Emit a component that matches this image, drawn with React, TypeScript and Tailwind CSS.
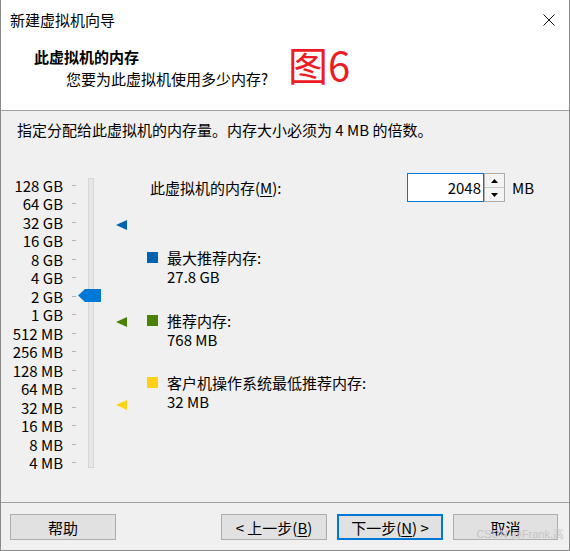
import React from 'react';

const sizes = [
  '128 GB', '64 GB', '32 GB', '16 GB', '8 GB', '4 GB', '2 GB', '1 GB',
  '512 MB', '256 MB', '128 MB', '64 MB', '32 MB', '16 MB', '8 MB', '4 MB',
];

function Marker({ color, top }: { color: string; top: string }) {
  return (
    <svg className={`absolute left-[40px] ${top}`} width="11" height="10" viewBox="0 0 11 10">
      <polygon points="0,5 11,0 11,10" fill={color} />
    </svg>
  );
}

function Legend({ color, label, value, className }: { color: string; label: string; value: string; className?: string }) {
  return (
    <div className={`flex items-start -ml-[3px] leading-[19px] ${className ?? ''}`}>
      <div className={`w-[11px] h-[11px] mt-[4px] mr-[9px] ${color}`} />
      <div>
        <div>{label}</div>
        <div>{value}</div>
      </div>
    </div>
  );
}

function Button({ children, primary }: { children: React.ReactNode; primary?: boolean }) {
  return (
    <div
      className={`h-[26px] flex items-center justify-center bg-[#e1e1e1] leading-none whitespace-nowrap ${
        primary ? 'border-2 border-[#0078d7]' : 'border border-[#adadad]'
      }`}
    >
      {children}
    </div>
  );
}

export default function App() {
  return (
    <div className="relative w-[570px] h-[551px] bg-[#f0f0f0] border-x border-b border-[#8a8a8a] flex flex-col text-[15px] text-black font-['Noto_Sans_CJK_SC',sans-serif]">
      {/* Title bar + header */}
      <div className="h-[111px] shrink-0 bg-white border-b border-[#a0a0a0]">
        <div className="h-[40px] flex items-center pl-[9px] pr-[14px]">
          <div className="flex-1 leading-[20px]">新建虚拟机向导</div>
          <svg width="12" height="12" viewBox="0 0 12 12">
            <path d="M0.5 0.5L11.5 11.5M11.5 0.5L0.5 11.5" stroke="#111" strokeWidth="1" />
          </svg>
        </div>
        <div className="flex pt-[7px] pl-[33px]">
          <div className="w-[256px]">
            <div className="font-bold leading-[20px]">此虚拟机的内存</div>
            <div className="pl-[32px] mt-[2px] leading-[20px]">您要为此虚拟机使用多少内存?</div>
          </div>
          <div className="text-[40px] leading-[40px] -mt-[3px] -ml-[2px] text-[#ed1c24]">图6</div>
        </div>
      </div>

      {/* Body */}
      <div className="flex-1 pt-[9px] pl-[16px]">
        <div className="leading-[20px]">指定分配给此虚拟机的内存量。内存大小必须为 4 MB 的倍数。</div>

        <div className="flex mt-[36px]">
          {/* Scale labels */}
          <div className="flex flex-col">
            {sizes.map((s) => (
              <div key={s} className="flex items-center h-[18.53px]">
                <div className="w-[46px] flex justify-end whitespace-nowrap leading-none">{s}</div>
                <div className="ml-[9px] w-[4px] h-px bg-[#b4b4b4]" />
              </div>
            ))}
          </div>

          {/* Slider */}
          <div className="relative w-[74px] h-[296.5px]">
            <div className="ml-[12px] mt-[2px] w-[6px] h-[290px] bg-[#e7e7e7] border border-[#d6d6d6]" />
            <svg className="absolute left-[2px] top-[113px]" width="23" height="13" viewBox="0 0 23 13">
              <polygon points="0,6.5 7,0 23,0 23,13 7,13" fill="#0078d7" />
            </svg>
            <Marker color="#0063b1" top="top-[44px]" />
            <Marker color="#498205" top="top-[141px]" />
            <Marker color="#fcd116" top="top-[224px]" />
          </div>

          {/* Right column */}
          <div className="flex-1 -mt-[3px]">
            <div className="flex items-center h-[29px]">
              <div className="w-[257px] leading-none">
                此虚拟机的内存(<span className="underline underline-offset-2">M</span>):
              </div>
              <div className="w-[77px] h-[29px] bg-white border border-[#0078d7] flex items-center justify-end pr-[2px] leading-none">
                2048
              </div>
              <div className="w-[21px] h-[29px] border border-[#adadad] flex flex-col gap-px bg-[#c8c8c8]">
                <div className="flex-1 bg-[#f4f4f4] flex items-center justify-center">
                  <svg width="7" height="4" viewBox="0 0 7 4">
                    <polygon points="3.5,0 7,4 0,4" fill="#000" />
                  </svg>
                </div>
                <div className="flex-1 bg-[#f4f4f4] flex items-center justify-center">
                  <svg width="7" height="4" viewBox="0 0 7 4">
                    <polygon points="0,0 7,0 3.5,4" fill="#000" />
                  </svg>
                </div>
              </div>
              <div className="ml-[7px] leading-none">MB</div>
            </div>

            <Legend className="mt-[46px]" color="bg-[#0063b1]" label="最大推荐内存:" value="27.8 GB" />
            <Legend className="mt-[25px]" color="bg-[#498205]" label="推荐内存:" value="768 MB" />
            <Legend className="mt-[24px]" color="bg-[#fcd116]" label="客户机操作系统最低推荐内存:" value="32 MB" />
          </div>
        </div>
      </div>

      {/* Footer */}
      <div className="h-[48px] shrink-0 border-t border-[#a0a0a0] pt-[11px] pl-[9px] pr-[11px] flex items-start">
        <div className="w-[106px]">
          <Button>帮助</Button>
        </div>
        <div className="flex-1" />
        <div className="w-[106px]">
          <Button>
            &lt; 上一步(<span className="underline underline-offset-2">B</span>)
          </Button>
        </div>
        <div className="w-[106px] ml-[10px]">
          <Button primary>
            下一步(<span className="underline underline-offset-2">N</span>) &gt;
          </Button>
        </div>
        <div className="w-[105px] ml-[10px]">
          <Button>取消</Button>
        </div>
      </div>

      <div className="absolute right-[5px] top-[528px] text-[11px] leading-[12px] text-[#c4c4c4] whitespace-nowrap font-['Liberation_Sans',sans-serif]">
        CSDN @Frank.高
      </div>
    </div>
  );
}
